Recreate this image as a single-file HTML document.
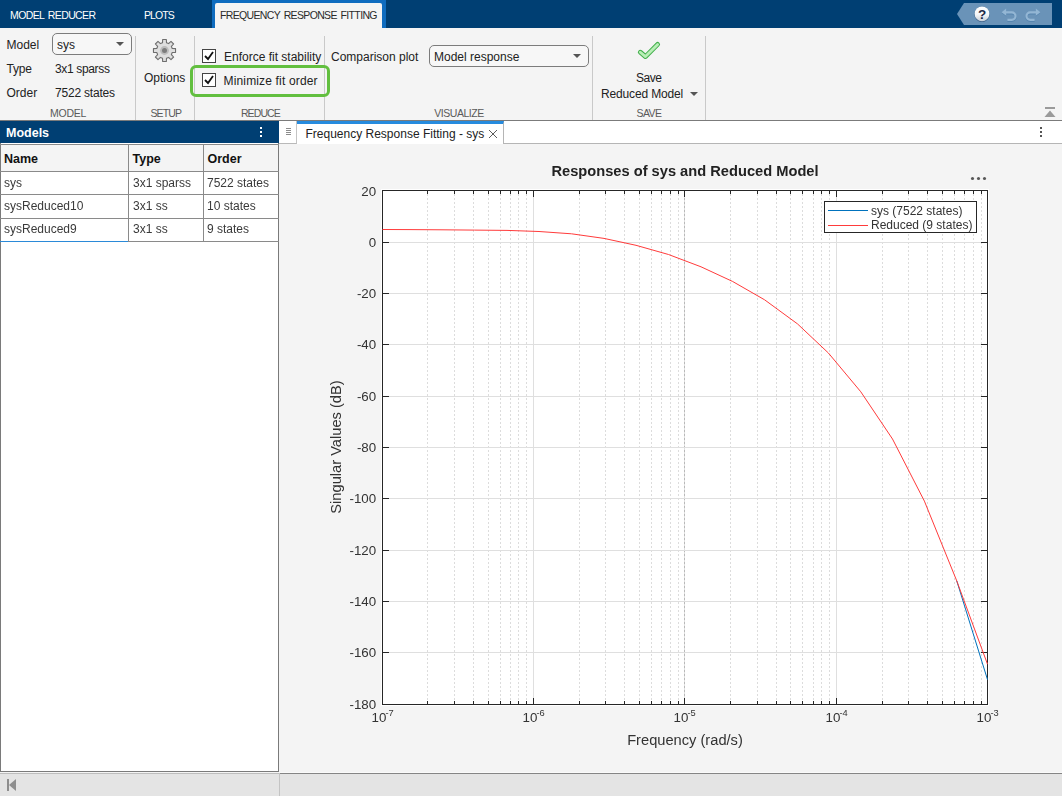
<!DOCTYPE html>
<html><head><meta charset="utf-8"><title>Model Reducer</title>
<style>
*{box-sizing:border-box;margin:0;padding:0}
html,body{width:1062px;height:796px;overflow:hidden;background:#f4f4f4;font-family:"Liberation Sans",sans-serif;font-size:12px;color:#1a1a1a}
.abs{position:absolute}
#topbar{position:absolute;left:0;top:0;width:1062px;height:28px;background:#003f73}
.tab{position:absolute;top:0;height:28px;line-height:30px;color:#fff;font-size:10.5px;letter-spacing:-0.6px;word-spacing:1.5px;white-space:nowrap}
#tabsel{position:absolute;left:212px;top:0;width:174px;height:28px;background:#0f6cbf}
#tabin{position:absolute;left:215px;top:3px;width:167px;height:25px;background:#f4f4f4;border-radius:2px 2px 0 0}
#strip{position:absolute;left:0;top:28px;width:1062px;height:93px;background:#f4f4f4;border-bottom:1px solid #7b7b7b}
.lbl{position:absolute;white-space:nowrap;font-size:12px;color:#222;line-height:14px}
.sec{position:absolute;top:107px;font-size:10.5px;color:#5a5a5a;white-space:nowrap;line-height:12px;letter-spacing:-0.3px;transform:translateX(-50%)}
.vsep{position:absolute;top:36px;width:1px;height:84px;background:#c9c9c9}
.dd{position:absolute;border:1px solid #7c7c7c;border-radius:5px;background:#f7f7f7;height:22px}
.dd span{position:absolute;left:4px;top:4px;font-size:12px;line-height:14px;white-space:nowrap;color:#222}
.dd i{position:absolute;right:7px;top:8px;width:0;height:0;border-left:4px solid transparent;border-right:4px solid transparent;border-top:4px solid #555}
.cb{position:absolute;width:14px;height:14px;border:1px solid #444;background:#fff}
#models{position:absolute;left:0;top:121px;width:279px;height:651px;background:#fff;border:1px solid #7a7a7a;border-top:none}
#mhead{position:absolute;left:0;top:121px;width:279px;height:22px;background:#003f73;color:#fff;font-size:12.5px;line-height:24px;padding-left:6px}
.tc{color:#3a3a3a;will-change:transform}
table{position:absolute;left:0;top:144px;border-collapse:collapse;font-size:12px}
td,th{border:1px solid #8c8c8c;height:23px;padding:0 0 0 3px;text-align:left;white-space:nowrap;color:#222}
th{background:#f4f4f4;font-weight:700;height:27px;font-size:12.5px;color:#111}
#status{position:absolute;left:0;top:773px;width:1062px;height:23px;background:#e4e4e4;border-top:1px solid #bdbdbd}
#doctab{position:absolute;left:279px;top:121px;width:783px;height:23px;background:#fff;border-bottom:1px solid #b5b5b5}
svg text{font-family:"Liberation Sans",sans-serif}
</style></head><body>
<div id="topbar"></div>
<div id="tabsel"></div><div id="tabin"></div>
<div class="tab" style="left:10px">MODEL REDUCER</div>
<div class="tab" style="left:144px;letter-spacing:-0.9px">PLOTS</div>
<div class="tab" style="left:220px;color:#2a2a2a;letter-spacing:-0.65px">FREQUENCY RESPONSE FITTING</div>
<!-- quick access -->
<svg class="abs" style="left:955px;top:0" width="107" height="28" viewBox="0 0 107 28">
<polygon points="2,14 9,3 97,3 97,25 9,25" fill="#6a93b8"/>
<defs><linearGradient id="hg" x1="0" y1="0" x2="0" y2="1"><stop offset="0" stop-color="#ffffff"/><stop offset="0.55" stop-color="#f4f6f8"/><stop offset="1" stop-color="#c9d0d9"/></linearGradient></defs>
<circle cx="27" cy="14.3" r="7.7" fill="#3b5f86"/>
<circle cx="27" cy="13.8" r="7.4" fill="url(#hg)"/>
<text x="27" y="18.6" text-anchor="middle" font-size="13.5" font-weight="700" fill="#1c2947">?</text>
<g fill="none" stroke="#5685ae" stroke-width="2.4"><path d="M50.5 13.3 h6.3 a3.7 3.7 0 0 1 0 7.4 h-4.4"/><path d="M81.5 13.3 h-6.3 a3.7 3.7 0 0 0 0 7.4 h4.4"/></g>
<polygon points="46.6,12.9 51.2,9.2 51.2,16.6" fill="#5685ae"/><polygon points="85.4,12.9 80.8,9.2 80.8,16.6" fill="#5685ae"/>
<g fill="none" stroke="#93b6d4" stroke-width="2.2"><path d="M50.5 12.4 h6.3 a3.7 3.7 0 0 1 0 7.4 h-4.4"/><path d="M81.5 12.4 h-6.3 a3.7 3.7 0 0 0 0 7.4 h4.4"/></g>
<polygon points="46.6,12.2 51.2,8.6 51.2,15.8" fill="#93b6d4"/><polygon points="85.4,12.2 80.8,8.6 80.8,15.8" fill="#93b6d4"/>
</svg>
<div id="strip"></div>
<div class="lbl" style="left:6.5px;top:38px">Model</div>
<div class="dd" style="left:52px;top:33px;width:80px"><span>sys</span><i></i></div>
<div class="lbl" style="left:6.5px;top:62px;letter-spacing:-0.2px">Type</div>
<div class="lbl" style="left:55px;top:62px;letter-spacing:-0.35px">3x1 sparss</div>
<div class="lbl" style="left:6.5px;top:86px">Order</div>
<div class="lbl" style="left:55px;top:86px;letter-spacing:-0.2px">7522 states</div>
<div class="vsep" style="left:135px"></div>
<div class="vsep" style="left:194px"></div>
<div class="vsep" style="left:324px"></div>
<div class="vsep" style="left:592px"></div>
<div class="vsep" style="left:705px"></div>
<div class="sec" style="left:68px">MODEL</div>
<div class="sec" style="left:165.8px;letter-spacing:-0.85px">SETUP</div>
<div class="sec" style="left:260.4px;letter-spacing:-0.9px">REDUCE</div>
<div class="sec" style="left:459px;letter-spacing:-0.45px">VISUALIZE</div>
<div class="sec" style="left:649px;letter-spacing:-0.6px">SAVE</div>
<!-- gear -->
<svg class="abs" style="left:151px;top:36.8px" width="27" height="27" viewBox="-13.5 -13.5 27 27">
<g fill="#dedede" stroke="#6e6e6e" stroke-width="1.1">
<path d="M-2.00 -7.75 L-1.85 -11.05 L1.85 -11.05 L2.00 -7.75 L4.06 -6.89 L6.50 -9.12 L9.12 -6.50 L6.89 -4.06 L7.75 -2.00 L11.05 -1.85 L11.05 1.85 L7.75 2.00 L6.89 4.06 L9.12 6.50 L6.50 9.12 L4.06 6.89 L2.00 7.75 L1.85 11.05 L-1.85 11.05 L-2.00 7.75 L-4.06 6.89 L-6.50 9.12 L-9.12 6.50 L-6.89 4.06 L-7.75 2.00 L-11.05 1.85 L-11.05 -1.85 L-7.75 -2.00 L-6.89 -4.06 L-9.12 -6.50 L-6.50 -9.12 L-4.06 -6.89Z" stroke-linejoin="round"/>
</g>
<circle r="4.4" fill="#bcbcbc"/><circle r="2.5" fill="#7c7c7c"/>
</svg>
<div class="lbl" style="left:144px;top:71px">Options</div>
<div class="cb" style="left:202px;top:49px"></div>
<div class="cb" style="left:202px;top:73px"></div>
<svg class="abs" style="left:202px;top:49px" width="14" height="40"><path d="M3 7 l3 3 l5 -7" fill="none" stroke="#111" stroke-width="1.8"/><path d="M3 31 l3 3 l5 -7" fill="none" stroke="#111" stroke-width="1.8"/></svg>
<div class="lbl" style="left:224px;top:50px">Enforce fit stability</div>
<div class="lbl" style="left:223.5px;top:74px;letter-spacing:0.16px">Minimize fit order</div>
<div class="abs" style="left:190px;top:65px;width:140px;height:32px;border:3px solid #62bf3f;border-radius:6px"></div>
<div class="lbl" style="left:331px;top:50px">Comparison plot</div>
<div class="dd" style="left:429px;top:45px;width:160px"><span>Model response</span><i></i></div>
<svg class="abs" style="left:630px;top:36px" width="36" height="28" viewBox="630 36 36 28"><path d="M640.3 52.2 L645.5 56.6 L657.6 44.4" fill="none" stroke="#3fae49" stroke-width="4.8" stroke-linecap="round" stroke-linejoin="round"/><path d="M640.3 52.2 L645.5 56.6 L657.6 44.4" fill="none" stroke="#b8eeb6" stroke-width="2.8" stroke-linecap="round" stroke-linejoin="round"/></svg>
<div class="lbl" style="left:636px;top:71px;letter-spacing:-0.5px">Save</div>
<div class="lbl" style="left:601px;top:87px;letter-spacing:-0.15px">Reduced Model</div>
<div class="abs" style="left:690px;top:92px;width:0;height:0;border-left:4px solid transparent;border-right:4px solid transparent;border-top:4px solid #555"></div>
<svg class="abs" style="left:1044px;top:106px" width="13" height="12"><rect x="1" y="1" width="10" height="2" fill="#9a9a9a"/><polygon points="0.5,11 11.5,11 6,4.6" fill="#9a9a9a"/></svg>
<!-- models panel -->
<div id="models"></div>
<div id="mhead"><b>Models</b></div>
<svg class="abs" style="left:258px;top:125px" width="6" height="14"><rect x="2" y="2" width="2" height="2" fill="#fff"/><rect x="2" y="6" width="2" height="2" fill="#fff"/><rect x="2" y="10" width="2" height="2" fill="#fff"/></svg>
<div class="abs" style="left:1px;top:145px;width:277px;height:26px;background:#f4f4f4"></div>
<div class="abs" style="left:0;top:144px;width:279px;height:1px;background:#8a8a8a"></div>
<div class="abs" style="left:0;top:171px;width:279px;height:1px;background:#8a8a8a"></div>
<div class="abs" style="left:0;top:194px;width:279px;height:1px;background:#8a8a8a"></div>
<div class="abs" style="left:0;top:218px;width:279px;height:1px;background:#8a8a8a"></div>
<div class="abs" style="left:0;top:241px;width:279px;height:1px;background:#8a8a8a"></div>
<div class="abs" style="left:128px;top:144px;width:1px;height:98px;background:#8a8a8a"></div>
<div class="abs" style="left:203px;top:144px;width:1px;height:98px;background:#8a8a8a"></div>
<div class="lbl" style="left:4px;top:152px;font-weight:700;color:#111;font-size:12.5px">Name</div>
<div class="lbl" style="left:132.5px;top:152px;font-weight:700;color:#111;font-size:12.5px">Type</div>
<div class="lbl" style="left:207.5px;top:152px;font-weight:700;color:#111;font-size:12.5px">Order</div>
<div class="lbl tc" style="left:4px;top:176px">sys</div><div class="lbl tc" style="left:132.5px;top:176px">3x1 sparss</div><div class="lbl tc" style="left:207px;top:176px">7522 states</div>
<div class="lbl tc" style="left:4px;top:199px">sysReduced10</div><div class="lbl tc" style="left:132.5px;top:199px">3x1 ss</div><div class="lbl tc" style="left:207px;top:199px">10 states</div>
<div class="lbl tc" style="left:4px;top:222.3px">sysReduced9</div><div class="lbl tc" style="left:132.5px;top:222.3px">3x1 ss</div><div class="lbl tc" style="left:207px;top:222.3px">9 states</div>

<div class="abs" style="left:0px;top:241px;width:128px;height:1px;background:#2b8ad8"></div>
<!-- doc area -->
<div id="doctab"></div>
<div class="abs" style="left:279px;top:121px;width:18px;height:23px;background:#fff;border-right:1px solid #c4c4c4;border-bottom:1px solid #b9b9b9"></div>
<svg class="abs" style="left:286px;top:128px" width="5" height="8"><rect y="0" width="5" height="1" fill="#8c8c8c"/><rect y="2" width="5" height="1" fill="#8c8c8c"/><rect y="4" width="5" height="1" fill="#8c8c8c"/><rect y="6" width="5" height="1" fill="#8c8c8c"/></svg>
<div class="abs" style="left:297px;top:121px;width:207px;height:23px;background:#fff;border-top:3px solid #268bde;border-right:1px solid #b5b5b5"></div>
<div class="lbl" style="left:305.5px;top:127px">Frequency Response Fitting - sys</div>
<svg class="abs" style="left:488px;top:129px" width="10" height="10"><path d="M1 1 L9 9 M9 1 L1 9" stroke="#4a4a4a" stroke-width="0.9"/></svg>
<svg class="abs" style="left:1038px;top:125px" width="6" height="14"><rect x="2" y="2" width="2" height="2" fill="#555"/><rect x="2" y="6" width="2" height="2" fill="#555"/><rect x="2" y="10" width="2" height="2" fill="#555"/></svg>
<svg class="abs" style="left:0;top:0;will-change:transform" width="1062" height="796" viewBox="0 0 1062 796">
<g shape-rendering="crispEdges">
<rect x="381" y="189" width="608" height="517" fill="#fff"/>
<line x1="427.5" y1="190" x2="427.5" y2="704" stroke="#dcdcdc" stroke-width="1" stroke-dasharray="2 2"/>
<line x1="454.5" y1="190" x2="454.5" y2="704" stroke="#dcdcdc" stroke-width="1" stroke-dasharray="2 2"/>
<line x1="473.5" y1="190" x2="473.5" y2="704" stroke="#dcdcdc" stroke-width="1" stroke-dasharray="2 2"/>
<line x1="488.5" y1="190" x2="488.5" y2="704" stroke="#dcdcdc" stroke-width="1" stroke-dasharray="2 2"/>
<line x1="500.5" y1="190" x2="500.5" y2="704" stroke="#dcdcdc" stroke-width="1" stroke-dasharray="2 2"/>
<line x1="510.5" y1="190" x2="510.5" y2="704" stroke="#dcdcdc" stroke-width="1" stroke-dasharray="2 2"/>
<line x1="518.5" y1="190" x2="518.5" y2="704" stroke="#dcdcdc" stroke-width="1" stroke-dasharray="2 2"/>
<line x1="526.5" y1="190" x2="526.5" y2="704" stroke="#dcdcdc" stroke-width="1" stroke-dasharray="2 2"/>
<line x1="579.5" y1="190" x2="579.5" y2="704" stroke="#dcdcdc" stroke-width="1" stroke-dasharray="2 2"/>
<line x1="605.5" y1="190" x2="605.5" y2="704" stroke="#dcdcdc" stroke-width="1" stroke-dasharray="2 2"/>
<line x1="624.5" y1="190" x2="624.5" y2="704" stroke="#dcdcdc" stroke-width="1" stroke-dasharray="2 2"/>
<line x1="639.5" y1="190" x2="639.5" y2="704" stroke="#dcdcdc" stroke-width="1" stroke-dasharray="2 2"/>
<line x1="651.5" y1="190" x2="651.5" y2="704" stroke="#dcdcdc" stroke-width="1" stroke-dasharray="2 2"/>
<line x1="661.5" y1="190" x2="661.5" y2="704" stroke="#dcdcdc" stroke-width="1" stroke-dasharray="2 2"/>
<line x1="670.5" y1="190" x2="670.5" y2="704" stroke="#dcdcdc" stroke-width="1" stroke-dasharray="2 2"/>
<line x1="678.5" y1="190" x2="678.5" y2="704" stroke="#dcdcdc" stroke-width="1" stroke-dasharray="2 2"/>
<line x1="730.5" y1="190" x2="730.5" y2="704" stroke="#dcdcdc" stroke-width="1" stroke-dasharray="2 2"/>
<line x1="757.5" y1="190" x2="757.5" y2="704" stroke="#dcdcdc" stroke-width="1" stroke-dasharray="2 2"/>
<line x1="776.5" y1="190" x2="776.5" y2="704" stroke="#dcdcdc" stroke-width="1" stroke-dasharray="2 2"/>
<line x1="790.5" y1="190" x2="790.5" y2="704" stroke="#dcdcdc" stroke-width="1" stroke-dasharray="2 2"/>
<line x1="802.5" y1="190" x2="802.5" y2="704" stroke="#dcdcdc" stroke-width="1" stroke-dasharray="2 2"/>
<line x1="813.5" y1="190" x2="813.5" y2="704" stroke="#dcdcdc" stroke-width="1" stroke-dasharray="2 2"/>
<line x1="821.5" y1="190" x2="821.5" y2="704" stroke="#dcdcdc" stroke-width="1" stroke-dasharray="2 2"/>
<line x1="829.5" y1="190" x2="829.5" y2="704" stroke="#dcdcdc" stroke-width="1" stroke-dasharray="2 2"/>
<line x1="882.5" y1="190" x2="882.5" y2="704" stroke="#dcdcdc" stroke-width="1" stroke-dasharray="2 2"/>
<line x1="908.5" y1="190" x2="908.5" y2="704" stroke="#dcdcdc" stroke-width="1" stroke-dasharray="2 2"/>
<line x1="927.5" y1="190" x2="927.5" y2="704" stroke="#dcdcdc" stroke-width="1" stroke-dasharray="2 2"/>
<line x1="942.5" y1="190" x2="942.5" y2="704" stroke="#dcdcdc" stroke-width="1" stroke-dasharray="2 2"/>
<line x1="954.5" y1="190" x2="954.5" y2="704" stroke="#dcdcdc" stroke-width="1" stroke-dasharray="2 2"/>
<line x1="964.5" y1="190" x2="964.5" y2="704" stroke="#dcdcdc" stroke-width="1" stroke-dasharray="2 2"/>
<line x1="973.5" y1="190" x2="973.5" y2="704" stroke="#dcdcdc" stroke-width="1" stroke-dasharray="2 2"/>
<line x1="981.5" y1="190" x2="981.5" y2="704" stroke="#dcdcdc" stroke-width="1" stroke-dasharray="2 2"/>
<line x1="533.5" y1="191" x2="533.5" y2="704" stroke="#dfdfdf" stroke-width="1"/>
<line x1="684.5" y1="191" x2="684.5" y2="704" stroke="#dfdfdf" stroke-width="1"/>
<line x1="836.5" y1="191" x2="836.5" y2="704" stroke="#dfdfdf" stroke-width="1"/>
<line x1="684.5" y1="190" x2="684.5" y2="704" stroke="#b9b9b9" stroke-width="1" stroke-dasharray="2 2"/>
<line x1="383" y1="242.5" x2="987" y2="242.5" stroke="#dfdfdf" stroke-width="1"/>
<line x1="383" y1="293.5" x2="987" y2="293.5" stroke="#dfdfdf" stroke-width="1"/>
<line x1="383" y1="344.5" x2="987" y2="344.5" stroke="#dfdfdf" stroke-width="1"/>
<line x1="383" y1="396.5" x2="987" y2="396.5" stroke="#dfdfdf" stroke-width="1"/>
<line x1="383" y1="447.5" x2="987" y2="447.5" stroke="#dfdfdf" stroke-width="1"/>
<line x1="383" y1="498.5" x2="987" y2="498.5" stroke="#dfdfdf" stroke-width="1"/>
<line x1="383" y1="550.5" x2="987" y2="550.5" stroke="#dfdfdf" stroke-width="1"/>
<line x1="383" y1="601.5" x2="987" y2="601.5" stroke="#dfdfdf" stroke-width="1"/>
<line x1="383" y1="652.5" x2="987" y2="652.5" stroke="#dfdfdf" stroke-width="1"/>
</g>
<g shape-rendering="crispEdges">
<line x1="533.5" y1="704" x2="533.5" y2="698" stroke="#262626"/>
<line x1="533.5" y1="191" x2="533.5" y2="197" stroke="#262626"/>
<line x1="684.5" y1="704" x2="684.5" y2="698" stroke="#262626"/>
<line x1="684.5" y1="191" x2="684.5" y2="197" stroke="#262626"/>
<line x1="836.5" y1="704" x2="836.5" y2="698" stroke="#262626"/>
<line x1="836.5" y1="191" x2="836.5" y2="197" stroke="#262626"/>
<line x1="427.5" y1="704" x2="427.5" y2="701" stroke="#262626"/>
<line x1="427.5" y1="191" x2="427.5" y2="194" stroke="#262626"/>
<line x1="454.5" y1="704" x2="454.5" y2="701" stroke="#262626"/>
<line x1="454.5" y1="191" x2="454.5" y2="194" stroke="#262626"/>
<line x1="473.5" y1="704" x2="473.5" y2="701" stroke="#262626"/>
<line x1="473.5" y1="191" x2="473.5" y2="194" stroke="#262626"/>
<line x1="488.5" y1="704" x2="488.5" y2="701" stroke="#262626"/>
<line x1="488.5" y1="191" x2="488.5" y2="194" stroke="#262626"/>
<line x1="500.5" y1="704" x2="500.5" y2="701" stroke="#262626"/>
<line x1="500.5" y1="191" x2="500.5" y2="194" stroke="#262626"/>
<line x1="510.5" y1="704" x2="510.5" y2="701" stroke="#262626"/>
<line x1="510.5" y1="191" x2="510.5" y2="194" stroke="#262626"/>
<line x1="518.5" y1="704" x2="518.5" y2="701" stroke="#262626"/>
<line x1="518.5" y1="191" x2="518.5" y2="194" stroke="#262626"/>
<line x1="526.5" y1="704" x2="526.5" y2="701" stroke="#262626"/>
<line x1="526.5" y1="191" x2="526.5" y2="194" stroke="#262626"/>
<line x1="579.5" y1="704" x2="579.5" y2="701" stroke="#262626"/>
<line x1="579.5" y1="191" x2="579.5" y2="194" stroke="#262626"/>
<line x1="605.5" y1="704" x2="605.5" y2="701" stroke="#262626"/>
<line x1="605.5" y1="191" x2="605.5" y2="194" stroke="#262626"/>
<line x1="624.5" y1="704" x2="624.5" y2="701" stroke="#262626"/>
<line x1="624.5" y1="191" x2="624.5" y2="194" stroke="#262626"/>
<line x1="639.5" y1="704" x2="639.5" y2="701" stroke="#262626"/>
<line x1="639.5" y1="191" x2="639.5" y2="194" stroke="#262626"/>
<line x1="651.5" y1="704" x2="651.5" y2="701" stroke="#262626"/>
<line x1="651.5" y1="191" x2="651.5" y2="194" stroke="#262626"/>
<line x1="661.5" y1="704" x2="661.5" y2="701" stroke="#262626"/>
<line x1="661.5" y1="191" x2="661.5" y2="194" stroke="#262626"/>
<line x1="670.5" y1="704" x2="670.5" y2="701" stroke="#262626"/>
<line x1="670.5" y1="191" x2="670.5" y2="194" stroke="#262626"/>
<line x1="678.5" y1="704" x2="678.5" y2="701" stroke="#262626"/>
<line x1="678.5" y1="191" x2="678.5" y2="194" stroke="#262626"/>
<line x1="730.5" y1="704" x2="730.5" y2="701" stroke="#262626"/>
<line x1="730.5" y1="191" x2="730.5" y2="194" stroke="#262626"/>
<line x1="757.5" y1="704" x2="757.5" y2="701" stroke="#262626"/>
<line x1="757.5" y1="191" x2="757.5" y2="194" stroke="#262626"/>
<line x1="776.5" y1="704" x2="776.5" y2="701" stroke="#262626"/>
<line x1="776.5" y1="191" x2="776.5" y2="194" stroke="#262626"/>
<line x1="790.5" y1="704" x2="790.5" y2="701" stroke="#262626"/>
<line x1="790.5" y1="191" x2="790.5" y2="194" stroke="#262626"/>
<line x1="802.5" y1="704" x2="802.5" y2="701" stroke="#262626"/>
<line x1="802.5" y1="191" x2="802.5" y2="194" stroke="#262626"/>
<line x1="813.5" y1="704" x2="813.5" y2="701" stroke="#262626"/>
<line x1="813.5" y1="191" x2="813.5" y2="194" stroke="#262626"/>
<line x1="821.5" y1="704" x2="821.5" y2="701" stroke="#262626"/>
<line x1="821.5" y1="191" x2="821.5" y2="194" stroke="#262626"/>
<line x1="829.5" y1="704" x2="829.5" y2="701" stroke="#262626"/>
<line x1="829.5" y1="191" x2="829.5" y2="194" stroke="#262626"/>
<line x1="882.5" y1="704" x2="882.5" y2="701" stroke="#262626"/>
<line x1="882.5" y1="191" x2="882.5" y2="194" stroke="#262626"/>
<line x1="908.5" y1="704" x2="908.5" y2="701" stroke="#262626"/>
<line x1="908.5" y1="191" x2="908.5" y2="194" stroke="#262626"/>
<line x1="927.5" y1="704" x2="927.5" y2="701" stroke="#262626"/>
<line x1="927.5" y1="191" x2="927.5" y2="194" stroke="#262626"/>
<line x1="942.5" y1="704" x2="942.5" y2="701" stroke="#262626"/>
<line x1="942.5" y1="191" x2="942.5" y2="194" stroke="#262626"/>
<line x1="954.5" y1="704" x2="954.5" y2="701" stroke="#262626"/>
<line x1="954.5" y1="191" x2="954.5" y2="194" stroke="#262626"/>
<line x1="964.5" y1="704" x2="964.5" y2="701" stroke="#262626"/>
<line x1="964.5" y1="191" x2="964.5" y2="194" stroke="#262626"/>
<line x1="973.5" y1="704" x2="973.5" y2="701" stroke="#262626"/>
<line x1="973.5" y1="191" x2="973.5" y2="194" stroke="#262626"/>
<line x1="981.5" y1="704" x2="981.5" y2="701" stroke="#262626"/>
<line x1="981.5" y1="191" x2="981.5" y2="194" stroke="#262626"/>
<line x1="383" y1="242.5" x2="389" y2="242.5" stroke="#262626"/>
<line x1="987" y1="242.5" x2="981" y2="242.5" stroke="#262626"/>
<line x1="383" y1="293.5" x2="389" y2="293.5" stroke="#262626"/>
<line x1="987" y1="293.5" x2="981" y2="293.5" stroke="#262626"/>
<line x1="383" y1="344.5" x2="389" y2="344.5" stroke="#262626"/>
<line x1="987" y1="344.5" x2="981" y2="344.5" stroke="#262626"/>
<line x1="383" y1="396.5" x2="389" y2="396.5" stroke="#262626"/>
<line x1="987" y1="396.5" x2="981" y2="396.5" stroke="#262626"/>
<line x1="383" y1="447.5" x2="389" y2="447.5" stroke="#262626"/>
<line x1="987" y1="447.5" x2="981" y2="447.5" stroke="#262626"/>
<line x1="383" y1="498.5" x2="389" y2="498.5" stroke="#262626"/>
<line x1="987" y1="498.5" x2="981" y2="498.5" stroke="#262626"/>
<line x1="383" y1="550.5" x2="389" y2="550.5" stroke="#262626"/>
<line x1="987" y1="550.5" x2="981" y2="550.5" stroke="#262626"/>
<line x1="383" y1="601.5" x2="389" y2="601.5" stroke="#262626"/>
<line x1="987" y1="601.5" x2="981" y2="601.5" stroke="#262626"/>
<line x1="383" y1="652.5" x2="389" y2="652.5" stroke="#262626"/>
<line x1="987" y1="652.5" x2="981" y2="652.5" stroke="#262626"/>
<rect x="382.5" y="190.5" width="605" height="514" fill="none" stroke="#262626" stroke-width="1"/>
</g>
<polyline points="956.8,581.0 987.5,679.6" fill="none" stroke="#0072bd" stroke-width="1" stroke-linejoin="round"/>
<polyline points="382.5,229.5 410.0,229.6 442.0,229.8 474.5,230.1 507.0,230.4 539.0,231.5 571.5,233.8 604.0,238.4 636.0,245.3 668.5,254.5 701.0,266.8 732.7,281.5 764.6,299.8 797.5,323.9 828.4,353.0 860.8,391.8 892.5,439.0 924.4,501.1 956.8,581.0 987.5,664.2" fill="none" stroke="#ff3b3b" stroke-width="1" stroke-linejoin="round"/>
<text x="376.2" y="195.5" text-anchor="end" font-size="13.33" fill="#333">20</text>
<text x="376.2" y="246.5" text-anchor="end" font-size="13.33" fill="#333">0</text>
<text x="376.2" y="297.5" text-anchor="end" font-size="13.33" fill="#333">-20</text>
<text x="376.2" y="348.5" text-anchor="end" font-size="13.33" fill="#333">-40</text>
<text x="376.2" y="400.5" text-anchor="end" font-size="13.33" fill="#333">-60</text>
<text x="376.2" y="451.5" text-anchor="end" font-size="13.33" fill="#333">-80</text>
<text x="376.2" y="502.5" text-anchor="end" font-size="13.33" fill="#333">-100</text>
<text x="376.2" y="554.5" text-anchor="end" font-size="13.33" fill="#333">-120</text>
<text x="376.2" y="605.5" text-anchor="end" font-size="13.33" fill="#333">-140</text>
<text x="376.2" y="656.5" text-anchor="end" font-size="13.33" fill="#333">-160</text>
<text x="376.2" y="708.5" text-anchor="end" font-size="13.33" fill="#333">-180</text>
<text x="371.6" y="722" font-size="13.33" fill="#333">10<tspan dx="-0.9" dy="-6" font-size="9.3">-7</tspan></text>
<text x="522.6" y="722" font-size="13.33" fill="#333">10<tspan dx="-0.9" dy="-6" font-size="9.3">-6</tspan></text>
<text x="673.6" y="722" font-size="13.33" fill="#333">10<tspan dx="-0.9" dy="-6" font-size="9.3">-5</tspan></text>
<text x="825.6" y="722" font-size="13.33" fill="#333">10<tspan dx="-0.9" dy="-6" font-size="9.3">-4</tspan></text>
<text x="976.6" y="722" font-size="13.33" fill="#333">10<tspan dx="-0.9" dy="-6" font-size="9.3">-3</tspan></text>
<text x="685" y="744.5" text-anchor="middle" font-size="14.67" fill="#333">Frequency (rad/s)</text>
<text transform="translate(341,447) rotate(-90)" text-anchor="middle" font-size="14.67" fill="#333">Singular Values (dB)</text>
<text x="685" y="176" text-anchor="middle" font-size="14.67" font-weight="700" fill="#222">Responses of sys and Reduced Model</text>
<rect x="824.5" y="201.5" width="152" height="31" fill="#fff" stroke="#262626" shape-rendering="crispEdges"/>
<line x1="827.5" y1="210.5" x2="867.5" y2="210.5" stroke="#0072bd" stroke-width="1" shape-rendering="crispEdges"/>
<line x1="827.5" y1="225.5" x2="867.5" y2="225.5" stroke="#ff3b3b" stroke-width="1" shape-rendering="crispEdges"/>
<text x="871" y="214.6" font-size="12" fill="#333">sys (7522 states)</text>
<text x="871" y="228.6" font-size="12" fill="#333">Reduced (9 states)</text>
<circle cx="972.5" cy="178.5" r="1.55" fill="#585858"/>
<circle cx="978.5" cy="178.5" r="1.55" fill="#585858"/>
<circle cx="984.5" cy="178.5" r="1.55" fill="#585858"/>
</svg>
<div id="status"></div>
<div class="abs" style="left:280px;top:772px;width:782px;height:1px;background:#fafafa"></div>
<div class="abs" style="left:280px;top:773px;width:782px;height:1px;background:#858585"></div>
<div class="abs" style="left:279px;top:773px;width:1px;height:23px;background:#c4c4c4"></div>
<svg class="abs" style="left:6px;top:779px" width="12" height="13"><rect x="1" y="0" width="2" height="12" fill="#8e8e8e"/><polygon points="10,0 10,12 3,6" fill="#8e8e8e"/></svg>
</body></html>
